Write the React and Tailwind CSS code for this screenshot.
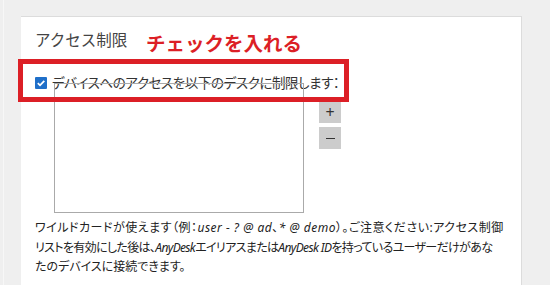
export default function App() {
  const font = { fontFamily: '"Noto Sans", "Noto Sans CJK JP", sans-serif' };
  return (
    <div className="relative w-[550px] h-[285px] overflow-hidden bg-[#efefef]" style={font}>
      <div className="absolute left-[3px] top-0 bottom-0 w-px bg-[#f7f7f7]" />
      <div className="ml-[21px] mt-[16px] w-[501px] h-[269px] bg-white border-t border-r border-[#dcdcdc] pl-[14px] pt-[12px]">
        <div className="text-[15.5px] leading-[22px] text-[#444] whitespace-nowrap">アクセス制限</div>
        <div className="mt-[22px] flex items-center h-[20px]">
          <div className="w-[12px] h-[12px] bg-[#1f6fc9] rounded-[1px] flex items-center justify-center">
            <svg width="10" height="10" viewBox="0 0 10 10">
              <path d="M1.8 5.2 L4 7.3 L8.3 2.8" fill="none" stroke="white" strokeWidth="1.8" />
            </svg>
          </div>
          <span className="ml-[5px] text-[13.5px] tracking-[-0.4px] text-[#333] whitespace-nowrap [font-feature-settings:'palt']">デバイスへのアクセスを以下のデスクに制限します：</span>
        </div>
        <div className="flex mt-[-10px] ml-[19px]">
          <div className="w-[250px] h-[130px] border border-[#aaaaaa]" />
          <div className="ml-[15px] mt-[18px] flex flex-col gap-[4px]">
            <div className="w-[22px] h-[22px] bg-[#cccccc] flex items-center justify-center text-[#333] text-[16px] leading-none">+</div>
            <div className="w-[22px] h-[22px] bg-[#cccccc] flex items-center justify-center">
              <div className="w-[9px] h-px bg-[#333]" />
            </div>
          </div>
        </div>
        <div className="mt-[5px] text-[12px] leading-[19.5px] text-[#222] whitespace-nowrap [font-feature-settings:'palt']">
          <div className="tracking-[0.5px]">ワイルドカードが使えます（例：<i>user - ? @ ad</i>、<i>* @ demo</i>）。ご注意ください:アクセス制御</div>
          <div className="tracking-[-0.65px]">リストを有効にした後は、<i>AnyDesk</i>エイリアスまたは<i>AnyDesk ID</i>を持っているユーザーだけがあな</div>
          <div>たのデバイスに接続できます。</div>
        </div>
      </div>
      <div className="absolute left-[18px] top-[59px] w-[331px] h-[43px] border-[5px] border-[#dc1f26]" />
      <div className="absolute left-[146px] top-[32px] text-[19.5px] leading-[24px] font-bold text-[#dc1f26] whitespace-nowrap">チェックを入れる</div>
    </div>
  );
}
